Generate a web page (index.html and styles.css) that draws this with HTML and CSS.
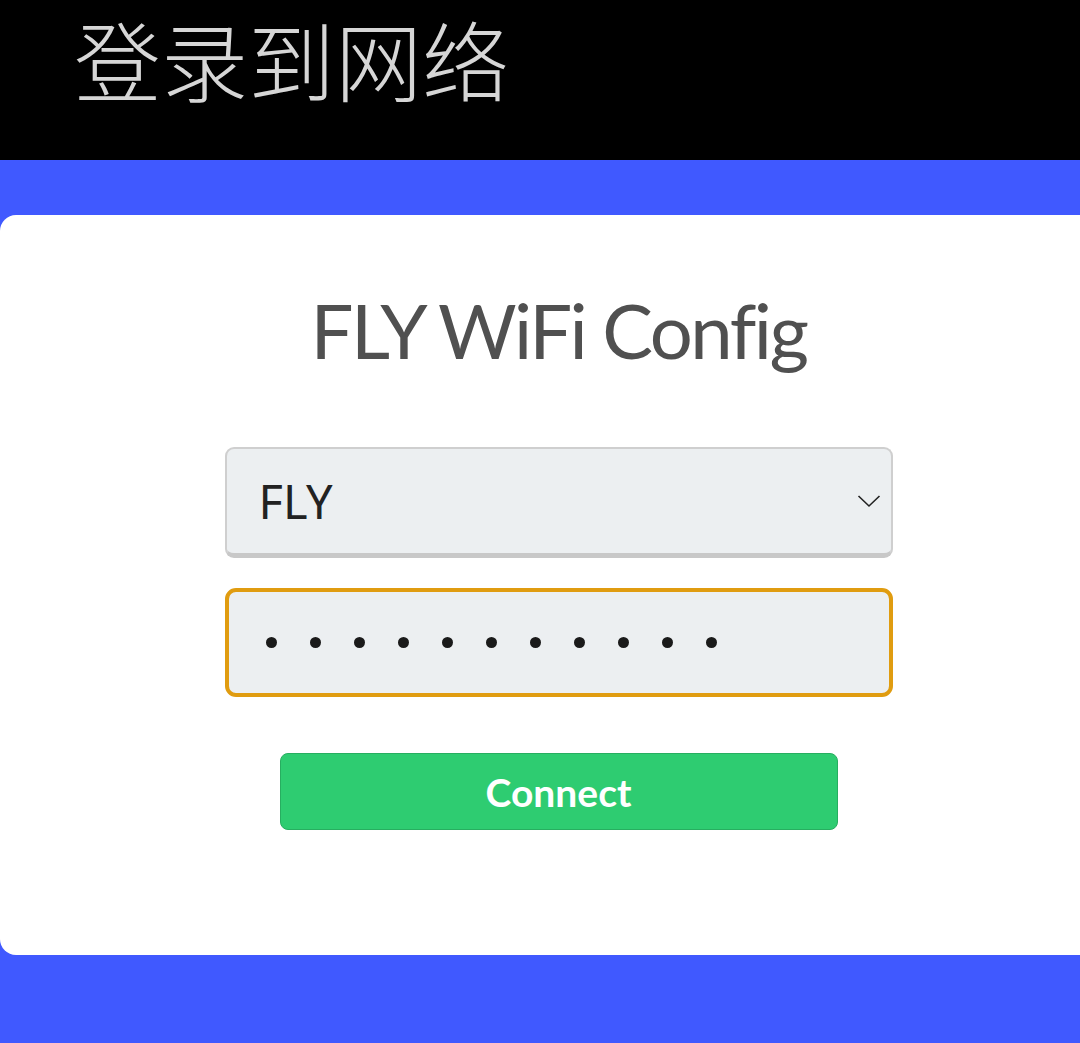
FILE: index.html
```html
<!DOCTYPE html>
<html lang="zh">
<head>
<meta charset="utf-8">
<link rel="stylesheet" href="styles.css">
</head>
<body>
<header class="topbar"><h1 class="topbar-title">登录到网络</h1></header>
<main class="stage">
  <section class="card">
    <h2 class="card-title">FLY WiFi Config</h2>
    <div class="field select">
      <span class="select-value">FLY</span>
      <svg class="chevron" width="24" height="14" viewBox="0 0 24 14"><path d="M1.5 2 L12 12 L22.5 2" fill="none" stroke="#222" stroke-width="1.6"/></svg>
    </div>
    <div class="field password">
      <span class="dot"></span><span class="dot"></span><span class="dot"></span><span class="dot"></span><span class="dot"></span><span class="dot"></span><span class="dot"></span><span class="dot"></span><span class="dot"></span><span class="dot"></span><span class="dot"></span>
    </div>
    <button class="connect">Connect</button>
  </section>
</main>
</body>
</html>
```
FILE: styles.css
```css
html, body {
  margin: 0;
  padding: 0;
  height: 100%;
  overflow: hidden;
}
body {
  background: #4059ff;
  font-family: Lato, "Noto Sans", sans-serif;
}
.topbar {
  background: #000;
  height: 160px;
  box-sizing: border-box;
  padding: 2px 0 0 74px;
}
.topbar-title {
  margin: 0;
  font-family: "Noto Sans CJK SC", sans-serif;
  font-weight: 300;
  font-size: 87px;
  line-height: 112px;
  color: #d6d6d6;
  white-space: nowrap;
}
.stage {
  padding-top: 55px;
}
.card {
  background: #fff;
  width: 1117px;
  height: 740px;
  box-sizing: border-box;
  border-radius: 16px;
  display: flex;
  flex-direction: column;
  align-items: center;
  padding-top: 77px;
}
.card-title {
  margin: 0;
  font-family: Lato, sans-serif;
  font-weight: 400;
  font-size: 76px;
  line-height: 76px;
  letter-spacing: -2.5px;
  font-variant-ligatures: none;
  color: #505050;
}
.field {
  box-sizing: border-box;
  width: 668px;
  background: #eceff1;
  display: flex;
  align-items: center;
}
.select {
  margin-top: 79px;
  height: 111px;
  border: 2px solid #cfcfcf;
  border-bottom: 5px solid #c8c8c8;
  border-radius: 9px;
  padding: 0 10px 0 32px;
  justify-content: space-between;
}
.select-value {
  font-family: "Noto Sans", sans-serif;
  font-size: 47px;
  color: #222;
}
.password {
  margin-top: 30px;
  height: 109px;
  border: 4px solid #e09c10;
  border-radius: 11px;
  padding-left: 37px;
  gap: 33px;
}
.dot {
  width: 11px;
  height: 11px;
  border-radius: 50%;
  background: #1a1a1a;
}
.connect {
  margin-top: 56px;
  width: 558px;
  height: 77px;
  background: #2ecc71;
  border: 1.5px solid #27ae60;
  border-radius: 8px;
  color: #fff;
  font-family: Lato, sans-serif;
  font-weight: 700;
  font-size: 39px;
  padding: 0;
}
```
